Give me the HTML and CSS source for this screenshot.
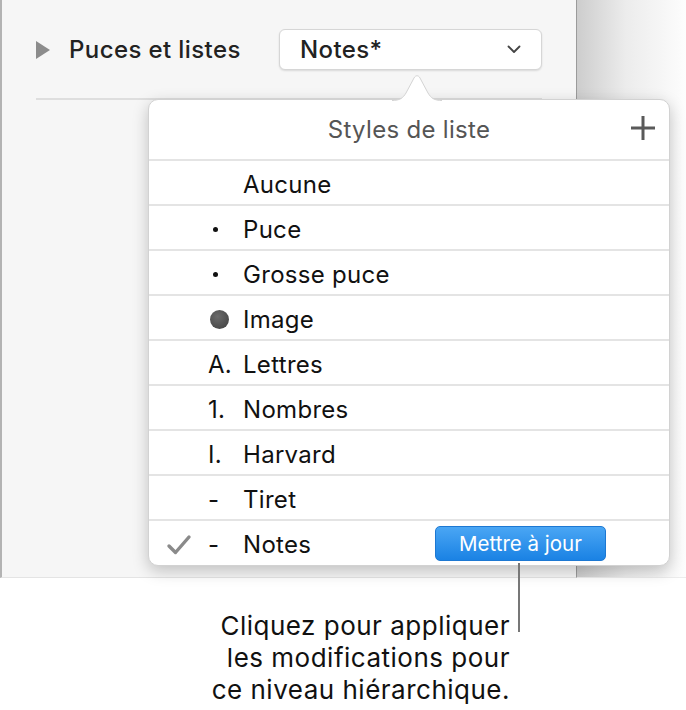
FILE: index.html
```html
<!DOCTYPE html>
<html lang="fr">
<head>
    <meta charset="UTF-8">
    <meta name="viewport" content="width=device-width, initial-scale=1.0">
    <title>Styles de liste</title>
    <link rel="stylesheet" href="styles.css">
</head>
<body>
    <div class="screen">
        <!-- Panneau de format -->
        <div class="sidebar">
            <div class="section-row">
                <svg class="disclosure" width="14" height="18" viewBox="0 0 14 18"><path d="M0 0 L14 9 L0 18 Z" fill="#8c8c8c"/></svg>
                <span class="section-title">Puces et listes</span>
                <div class="select">
                    <span>Notes*</span>
                    <svg width="14" height="9" viewBox="0 0 14 9"><path d="M1.5 1.5 L7 7 L12.5 1.5" fill="none" stroke="#444" stroke-width="1.8" stroke-linecap="round" stroke-linejoin="round"/></svg>
                </div>
            </div>
            <div class="rule"></div>
        </div>
        <div class="shade"></div>

        <!-- Fenetre Styles de liste -->
        <div class="popover">
            <svg class="popover-arrow" width="50" height="29" viewBox="0 0 50 29"><path d="M0 28.5 C8 28.5 11 26 14 21 L22 6 C23.5 3 26.5 3 28 6 L36 21 C39 26 42 28.5 50 28.5" fill="#fff" stroke="#d4d4d4" stroke-width="1"/></svg>
            <div class="popover-header">
                <span>Styles de liste</span>
                <svg class="btn-add" width="26" height="26" viewBox="0 0 26 26"><path d="M13 1 V25 M1 13 H25" stroke="#5a5a5a" stroke-width="3"/></svg>
            </div>
            <ul class="style-list">
                <li><span class="check"></span><span class="marker"></span><span class="label">Aucune</span></li>
                <li><span class="check"></span><span class="marker"><i class="dot"></i></span><span class="label">Puce</span></li>
                <li><span class="check"></span><span class="marker"><i class="dot"></i></span><span class="label">Grosse puce</span></li>
                <li><span class="check"></span><span class="marker"><i class="ball"></i></span><span class="label">Image</span></li>
                <li><span class="check"></span><span class="marker">A.</span><span class="label">Lettres</span></li>
                <li><span class="check"></span><span class="marker">1.</span><span class="label">Nombres</span></li>
                <li><span class="check"></span><span class="marker">I.</span><span class="label">Harvard</span></li>
                <li><span class="check"></span><span class="marker">-</span><span class="label">Tiret</span></li>
                <li>
                    <span class="check"><svg width="26" height="22" viewBox="0 0 26 22"><path d="M3 12 L9.5 18.5 L23 3" fill="none" stroke="#8a8a8a" stroke-width="3.4" stroke-linecap="round" stroke-linejoin="round"/></svg></span>
                    <span class="marker">-</span>
                    <span class="label">Notes</span>
                    <button class="btn-update">Mettre à jour</button>
                </li>
            </ul>
        </div>
        <div class="callout-line"></div>
    </div>

    <p class="callout">Cliquez pour appliquer<br>les modifications pour<br>ce niveau hiérarchique.</p>
</body>
</html>
```

FILE: styles.css
```css
body {
    margin: 0;
    background-color: #fff;
    font-family: Inter, Roboto, "Liberation Sans", Arial, sans-serif;
    color: #111;
}

.screen {
    position: relative;
    display: flex;
    height: 578px;
}

/* Panneau de gauche */
.sidebar {
    width: 574px;
    background-color: #f6f6f6;
    border-left: 2px solid #b3b3b3;
    border-right: 1px solid #9b9b9b;
    border-bottom: 1px solid #e4e4e4;
}

.shade {
    flex: 1;
    background: linear-gradient(to right, #cdcdcd, #ececec 45%, #fdfdfd);
    border-bottom: 1px solid #ececec;
}

.section-row {
    display: flex;
    align-items: center;
    height: 41px;
    margin-top: 29px;
    padding-left: 34px;
}

.disclosure {
    margin-right: 19px;
}

.section-title {
    font-size: 24px;
    font-weight: 500;
    letter-spacing: 0.4px;
    color: #222;
    width: 210px;
}

.select {
    display: flex;
    align-items: center;
    justify-content: space-between;
    box-sizing: border-box;
    width: 263px;
    height: 41px;
    padding: 0 20px 0 20px;
    background-color: #fff;
    border: 1px solid #d6d6d6;
    border-radius: 6px;
    box-shadow: 0 1px 2px rgba(0, 0, 0, 0.12);
    font-size: 24px;
    font-weight: 500;
    letter-spacing: 0.4px;
    color: #222;
}

.rule {
    height: 2px;
    margin: 28px 34px 0 34px;
    background-color: #dedede;
}

/* Popover */
.popover {
    position: absolute;
    left: 148px;
    top: 99px;
    width: 522px;
    height: 467px;
    box-sizing: border-box;
    background-color: #fff;
    border: 1px solid #d2d2d2;
    border-radius: 10px;
    box-shadow: 0 5px 16px rgba(0, 0, 0, 0.22);
}

.popover-arrow {
    position: absolute;
    left: 243px;
    top: -28px;
}

.popover-header {
    position: relative;
    height: 59px;
    display: flex;
    align-items: center;
    justify-content: center;
    font-size: 24px;
    letter-spacing: 0.3px;
    color: #555;
}

.popover-header .btn-add {
    position: absolute;
    right: 13px;
    top: 15px;
}

.style-list {
    list-style: none;
    margin: 0;
    padding: 0;
}

.style-list li {
    display: flex;
    align-items: center;
    box-sizing: border-box;
    height: 45px;
    padding-top: 4px;
    border-top: 2px solid #e4e4e4;
    font-size: 24px;
    letter-spacing: 0.3px;
}

.style-list .check {
    width: 59px;
    display: flex;
    justify-content: center;
}

.style-list .marker {
    width: 35px;
    display: flex;
    align-items: center;
}

.style-list .label {
    width: 192px;
}

.dot {
    display: block;
    width: 5px;
    height: 5px;
    margin-left: 5px;
    border-radius: 50%;
    background-color: #111;
}

.ball {
    display: block;
    width: 19px;
    height: 19px;
    margin-left: 2px;
    border-radius: 50%;
    background: radial-gradient(circle at 40% 35%, #6b6b6b, #3e3e3e);
}

.btn-update {
    height: 35px;
    width: 171px;
    padding: 0;
    margin-top: -2px;
    font-family: inherit;
    font-size: 20.5px;
    letter-spacing: 0;
    color: #fff;
    background: linear-gradient(#4aa6f4, #1a82e4);
    border: 1px solid #1d78d2;
    border-radius: 5px;
}

.callout-line {
    position: absolute;
    left: 518px;
    top: 563px;
    width: 2px;
    height: 69px;
    background-color: #777;
}

/* Legende */
.callout {
    margin: 0;
    padding-top: 32px;
    width: 510px;
    text-align: right;
    font-size: 26px;
    letter-spacing: 0.5px;
    line-height: 32px;
    color: #111;
}
```
